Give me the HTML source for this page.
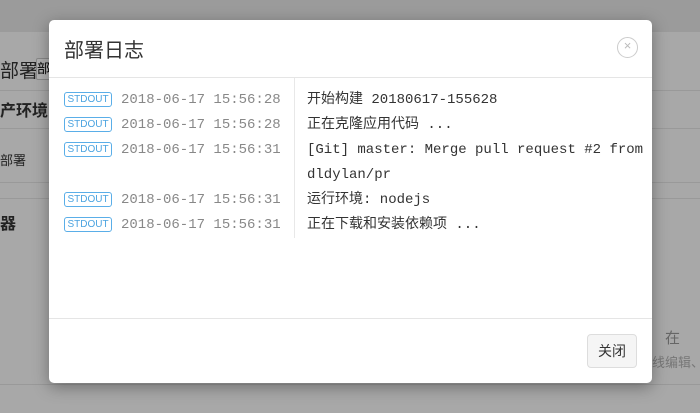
<!DOCTYPE html>
<html><head><meta charset="utf-8"><style>
body{margin:0;width:700px;height:413px;overflow:hidden;background:#a8a8a8;font-family:"Liberation Sans","Noto Sans CJK SC",sans-serif;position:relative}
.bg{position:absolute;left:0;right:0}
.m{position:absolute;left:49px;top:20px;width:603px;height:363px;background:#fff;border-radius:5px;box-shadow:0 4px 16px rgba(0,0,0,.35)}
.h{height:57px;border-bottom:1px solid #e5e5e5;position:relative}
.h span{position:absolute;left:15px;top:14px;font-size:20px;color:#333}
.x{position:absolute;left:568px;top:17px;width:19px;height:19px;border:1px solid #ccc;border-radius:50%;color:#bbb;font-size:13px;line-height:15px;text-align:center}
.body{height:240px;position:relative;font-family:"Liberation Mono","Noto Sans CJK SC",monospace;font-size:14px}
.div{position:absolute;left:245px;top:0;height:160px;border-left:1px solid #e8e8e8}
.r{position:absolute;left:15px;height:25px;line-height:25px;color:#888;white-space:nowrap}
.b{position:absolute;left:0;top:4px;box-sizing:border-box;border:1px solid #5aaee8;color:#4aa3e0;border-radius:3px;font-family:"Liberation Sans",sans-serif;font-size:10px;height:15px;width:48px;display:flex;align-items:center;justify-content:center;line-height:1}
.ts{position:absolute;left:57px;top:0}
.t{position:absolute;left:258px;height:25px;line-height:25px;color:#333;white-space:nowrap}
.f{position:absolute;left:0;right:0;top:298px;border-top:1px solid #e5e5e5}
.btn{position:absolute;left:538px;top:314px;width:48px;height:32px;border:1px solid #ddd;border-radius:4px;background:#f5f5f5;font-size:14px;line-height:32px;text-align:center;color:#333}
</style></head><body>
<div class="bg" style="top:0;height:32px;background:#9b9b9b"></div>
<div class="bg" style="top:90px;height:1px;background:#999"></div>
<div class="bg" style="top:128px;height:1px;background:#999"></div>
<div class="bg" style="top:182px;height:1px;background:#999"></div>
<div class="bg" style="top:198px;height:1px;background:#999"></div>
<div class="bg" style="top:384px;height:1px;background:#999"></div>
<div style="position:absolute;left:0;top:56px;font-size:19px;color:#222;white-space:nowrap">部署</div>
<div style="position:absolute;left:36px;top:58px;width:16px;height:20px;border:1px solid #888;border-radius:2px;background:#b0b0b0;font-size:13px;overflow:hidden;line-height:20px">部</div>
<div style="position:absolute;left:0;top:97px;font-size:16px;font-weight:bold;color:#222">产环境</div>
<div style="position:absolute;left:0;top:150px;font-size:13px;color:#222">部署</div>
<div style="position:absolute;left:0;top:210px;font-size:16px;font-weight:bold;color:#222">器</div>
<div style="position:absolute;left:665px;top:327px;font-size:15px;color:#666">在</div>
<div style="position:absolute;left:652px;top:352px;font-size:13px;color:#777;white-space:nowrap">线编辑、</div>
<div class="m">
<div class="h"><span>部署日志</span><div class="x">×</div></div>
<div class="body">
<div class="div"></div>
<div class="r" style="top:10px"><span class="b">STDOUT</span><span class="ts">2018-06-17 15:56:28</span></div>
<div class="r" style="top:35px"><span class="b">STDOUT</span><span class="ts">2018-06-17 15:56:28</span></div>
<div class="r" style="top:60px"><span class="b">STDOUT</span><span class="ts">2018-06-17 15:56:31</span></div>
<div class="r" style="top:110px"><span class="b">STDOUT</span><span class="ts">2018-06-17 15:56:31</span></div>
<div class="r" style="top:135px"><span class="b">STDOUT</span><span class="ts">2018-06-17 15:56:31</span></div>
<div class="t" style="top:10px">开始构建 20180617-155628</div>
<div class="t" style="top:35px">正在克隆应用代码 ...</div>
<div class="t" style="top:60px">[Git] master: Merge pull request #2 from</div>
<div class="t" style="top:85px">dldylan/pr</div>
<div class="t" style="top:110px">运行环境: nodejs</div>
<div class="t" style="top:135px">正在下载和安装依赖项 ...</div>
</div>
<div class="f"></div>
<div class="btn">关闭</div>
</div>
</body></html>
